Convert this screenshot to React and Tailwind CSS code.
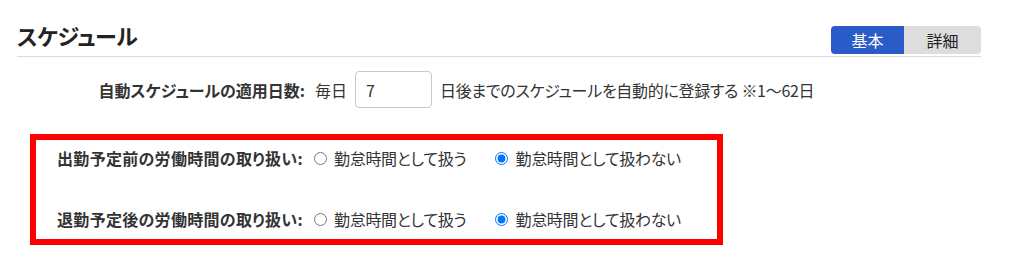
export default function App() {
  const rows = [
    { label: "出勤予定前の労働時間の取り扱い:", name: "before" },
    { label: "退勤予定後の労働時間の取り扱い:", name: "after" },
  ];

  return (
    <div className="w-[1018px] h-[266px] bg-white text-[#333] text-[16px] overflow-hidden font-['Noto_Sans_CJK_JP','Noto_Sans',sans-serif] [font-feature-settings:'palt']">
      <div className="ml-[17px] w-[964px] pt-[26px]">
        {/* Header */}
        <div className="flex items-start justify-between border-b border-[#dcdcdc] pb-[2px]">
          <h1 className="-mt-[3px] text-[22px] font-bold leading-[24px] text-[#222] tracking-[-0.5px]">スケジュール</h1>
          <div className="flex h-[28px] rounded-[4px] overflow-hidden text-[16px] leading-[28px]">
            <button className="w-[73px] bg-[#2b5bc9] text-white">基本</button>
            <button className="w-[77px] bg-[#dddddd] text-[#222]">詳細</button>
          </div>
        </div>

        {/* Auto schedule days */}
        <div className="flex items-center mt-[14px] h-[37px]">
          <div className="w-[288px] text-right font-bold">自動スケジュールの適用日数:</div>
          <span className="ml-[10px]">毎日</span>
          <input
            type="text"
            defaultValue="7"
            className="ml-[8px] w-[77px] h-[37px] border border-[#c8c8c8] rounded-[4px] pl-[10px] outline-none"
          />
          <span className="ml-[8px] tracking-[-0.3px]">日後までのスケジュールを自動的に登録する ※1〜62日</span>
        </div>

        {/* Highlighted section */}
        <div className="ml-[13px] mt-[26px] w-[693px] border-[6px] border-[#ff0000] pt-[7px] pb-[9px]">
          <div className="flex flex-col gap-[39px]">
            {rows.map((row) => (
              <div key={row.name} className="flex items-center h-[22px]">
                <div className="w-[267px] text-right font-bold tracking-[0.3px]">{row.label}</div>
                <label className="flex items-center ml-[11px]">
                  <input type="radio" name={row.name} className="w-[13px] h-[13px] m-0" />
                  <span className="ml-[7px] tracking-[-0.3px]">勤怠時間として扱う</span>
                </label>
                <label className="flex items-center ml-[29px]">
                  <input type="radio" name={row.name} defaultChecked className="w-[13px] h-[13px] m-0" />
                  <span className="ml-[7px] tracking-[-0.3px]">勤怠時間として扱わない</span>
                </label>
              </div>
            ))}
          </div>
        </div>
      </div>
    </div>
  );
}
